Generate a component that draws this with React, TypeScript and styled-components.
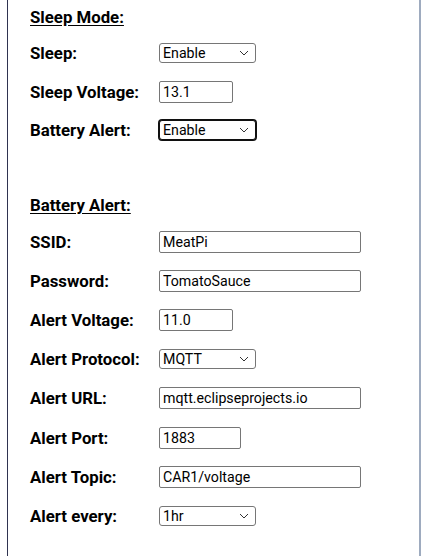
import React from "react";
import styled, { createGlobalStyle } from "styled-components";

const Global = createGlobalStyle`
  html, body { margin: 0; padding: 0; background: #ffffff; }
  body { font-family: Roboto, "Liberation Sans", sans-serif; color: #000; overflow: hidden; }
`;

const chevron =
  "url(\"data:image/svg+xml;utf8,<svg xmlns='http://www.w3.org/2000/svg' width='10' height='6' viewBox='0 0 10 6'><path d='M1 1 L5 5 L9 1' fill='none' stroke='%23333' stroke-width='1'/></svg>\")";

const Panel = styled.div`
  margin-left: 7px;
  width: 414px;
  min-height: 556px;
  border-left: 1px solid #2f3350;
  border-right: 2px solid #9eabbf;
  padding-left: 22px;
  box-sizing: border-box;
`;

const Heading = styled.div`
  height: 34px;
  display: flex;
  align-items: center;
  font-size: 16.8px;
  font-weight: 700;
  text-decoration: underline;
  text-underline-offset: 2px;
`;

const Row = styled.div<{ $h?: number }>`
  height: ${(p) => p.$h ?? 39.2}px;
  display: grid;
  grid-template-columns: 129px 1fr;
  align-items: center;
`;

const Label = styled.div`
  font-size: 16.8px;
  font-weight: 700;
`;

const TextInput = styled.input<{ $w: number }>`
  display: block;
  width: ${(p) => p.$w}px;
  height: 22px;
  box-sizing: border-box;
  border: 1px solid #767676;
  border-radius: 2px;
  padding: 1px 3px;
  font-family: Roboto, "Liberation Sans", sans-serif;
  font-size: 14.2px;
  color: #000;
  background: #fff;
  outline: none;
`;

const Select = styled.select<{ $focused?: boolean }>`
  display: block;
  appearance: none;
  -webkit-appearance: none;
  width: 97px;
  height: 20px;
  box-sizing: border-box;
  font-family: Roboto, "Liberation Sans", sans-serif;
  font-size: 14.2px;
  line-height: 18px;
  color: #000;
  background: #fff ${chevron} no-repeat right 6px center / 10px 6px;
  border: 1px solid ${(p) => (p.$focused ? "#101010" : "#767676")};
  border-radius: 3px;
  padding: 0 0 0 3px;
  outline: none;
  box-shadow: ${(p) => (p.$focused ? "0 0 0 1px #101010" : "none")};
`;

type Field =
  | { label: string; kind: "input"; value: string; w: number }
  | { label: string; kind: "select"; value: string; options: string[]; focused?: boolean };

const sleepFields: Field[] = [
  { label: "Sleep:", kind: "select", value: "Enable", options: ["Enable", "Disable"] },
  { label: "Sleep Voltage:", kind: "input", value: "13.1", w: 74 },
  { label: "Battery Alert:", kind: "select", value: "Enable", options: ["Enable", "Disable"], focused: true },
];

const alertFields: Field[] = [
  { label: "SSID:", kind: "input", value: "MeatPi", w: 202 },
  { label: "Password:", kind: "input", value: "TomatoSauce", w: 202 },
  { label: "Alert Voltage:", kind: "input", value: "11.0", w: 74 },
  { label: "Alert Protocol:", kind: "select", value: "MQTT", options: ["MQTT", "HTTP"] },
  { label: "Alert URL:", kind: "input", value: "mqtt.eclipseprojects.io", w: 202 },
  { label: "Alert Port:", kind: "input", value: "1883", w: 82 },
  { label: "Alert Topic:", kind: "input", value: "CAR1/voltage", w: 202 },
  { label: "Alert every:", kind: "select", value: "1hr", options: ["1hr", "6hr", "12hr", "24hr"] },
];

function FieldRow({ f, h }: { f: Field; h?: number }) {
  return (
    <Row $h={h}>
      <Label>{f.label}</Label>
      <div>
        {f.kind === "input" ? (
          <TextInput $w={f.w} defaultValue={f.value} />
        ) : (
          <Select $focused={f.focused} defaultValue={f.value}>
            {f.options.map((o) => (
              <option key={o}>{o}</option>
            ))}
          </Select>
        )}
      </div>
    </Row>
  );
}

export default function App() {
  return (
    <>
      <Global />
      <Panel>
        <Heading>Sleep Mode:</Heading>
        {sleepFields.map((f) => (
          <FieldRow key={f.label} f={f} h={38.5} />
        ))}
        <Row $h={38.5} />
        <Heading>Battery Alert:</Heading>
        {alertFields.map((f) => (
          <FieldRow key={f.label} f={f} />
        ))}
      </Panel>
    </>
  );
}
